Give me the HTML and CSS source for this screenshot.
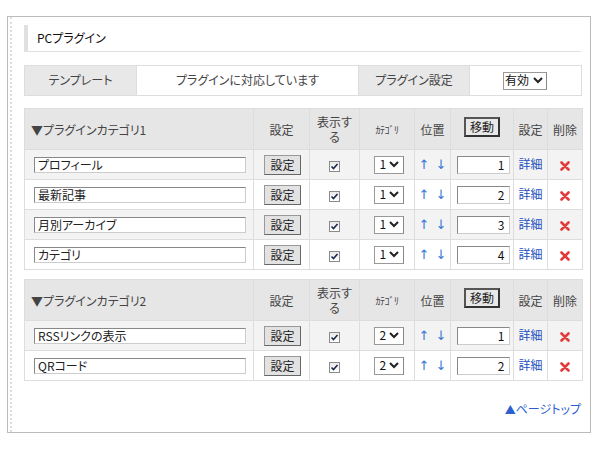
FILE: index.html
```html
<!DOCTYPE html>
<html lang="ja">
<head>
<meta charset="utf-8">
<title>PCプラグイン</title>
<link rel="stylesheet" href="styles.css">
</head>
<body>
<div class="panel">
  <div class="panel-inner">
    <h2 class="title">PCプラグイン</h2>

    <table class="tpl">
      <colgroup><col class="c112"><col class="c222"><col class="c111"><col class="c112"></colgroup>
      <tr>
        <th>テンプレート</th>
        <td>プラグインに対応しています</td>
        <th>プラグイン設定</th>
        <td><span class="sel sel-wide">有効<svg class="chev" viewBox="0 0 10 7" width="10" height="7"><polyline points="1,1 5,5 9,1" fill="none" stroke="#222" stroke-width="2"/></svg></span></td>
      </tr>
    </table>

    <table class="plg">
      <colgroup><col class="w-name"><col class="w-set"><col class="w-show"><col class="w-cat"><col class="w-pos"><col class="w-move"><col class="w-det"><col class="w-del"></colgroup>
      <tr class="head">
        <th class="left">▼プラグインカテゴリ1</th>
        <th>設定</th>
        <th class="show">表示する</th>
        <th class="half">ｶﾃｺﾞﾘ</th>
        <th>位置</th>
        <th><span class="btn-move">移動</span></th>
        <th>設定</th>
        <th>削除</th>
      </tr>
      <tr class="odd">
        <td class="left"><span class="txt">プロフィール</span></td>
        <td><span class="btn">設定</span></td>
        <td><span class="chk"><svg viewBox="0 0 11 11" width="11" height="11"><polyline points="2.5,5.5 4.5,7.5 8.5,3" fill="none" stroke="#1a2a4a" stroke-width="1.6"/></svg></span></td>
        <td><span class="sel">1<svg class="chev" viewBox="0 0 10 7" width="10" height="7"><polyline points="1,1 5,5 9,1" fill="none" stroke="#222" stroke-width="2"/></svg></span></td>
        <td class="arrows"><span>↑</span><span>↓</span></td>
        <td><span class="num">1</span></td>
        <td><a class="link">詳細</a></td>
        <td><svg class="del" viewBox="0 0 10 10" width="10" height="10"><path d="M1.5 1.5 L8.5 8.5 M8.5 1.5 L1.5 8.5" stroke="#e23b3b" stroke-width="2.6" stroke-linecap="round"/></svg></td>
      </tr>
      <tr>
        <td class="left"><span class="txt">最新記事</span></td>
        <td><span class="btn">設定</span></td>
        <td><span class="chk"><svg viewBox="0 0 11 11" width="11" height="11"><polyline points="2.5,5.5 4.5,7.5 8.5,3" fill="none" stroke="#1a2a4a" stroke-width="1.6"/></svg></span></td>
        <td><span class="sel">1<svg class="chev" viewBox="0 0 10 7" width="10" height="7"><polyline points="1,1 5,5 9,1" fill="none" stroke="#222" stroke-width="2"/></svg></span></td>
        <td class="arrows"><span>↑</span><span>↓</span></td>
        <td><span class="num">2</span></td>
        <td><a class="link">詳細</a></td>
        <td><svg class="del" viewBox="0 0 10 10" width="10" height="10"><path d="M1.5 1.5 L8.5 8.5 M8.5 1.5 L1.5 8.5" stroke="#e23b3b" stroke-width="2.6" stroke-linecap="round"/></svg></td>
      </tr>
      <tr class="odd">
        <td class="left"><span class="txt">月別アーカイブ</span></td>
        <td><span class="btn">設定</span></td>
        <td><span class="chk"><svg viewBox="0 0 11 11" width="11" height="11"><polyline points="2.5,5.5 4.5,7.5 8.5,3" fill="none" stroke="#1a2a4a" stroke-width="1.6"/></svg></span></td>
        <td><span class="sel">1<svg class="chev" viewBox="0 0 10 7" width="10" height="7"><polyline points="1,1 5,5 9,1" fill="none" stroke="#222" stroke-width="2"/></svg></span></td>
        <td class="arrows"><span>↑</span><span>↓</span></td>
        <td><span class="num">3</span></td>
        <td><a class="link">詳細</a></td>
        <td><svg class="del" viewBox="0 0 10 10" width="10" height="10"><path d="M1.5 1.5 L8.5 8.5 M8.5 1.5 L1.5 8.5" stroke="#e23b3b" stroke-width="2.6" stroke-linecap="round"/></svg></td>
      </tr>
      <tr>
        <td class="left"><span class="txt">カテゴリ</span></td>
        <td><span class="btn">設定</span></td>
        <td><span class="chk"><svg viewBox="0 0 11 11" width="11" height="11"><polyline points="2.5,5.5 4.5,7.5 8.5,3" fill="none" stroke="#1a2a4a" stroke-width="1.6"/></svg></span></td>
        <td><span class="sel">1<svg class="chev" viewBox="0 0 10 7" width="10" height="7"><polyline points="1,1 5,5 9,1" fill="none" stroke="#222" stroke-width="2"/></svg></span></td>
        <td class="arrows"><span>↑</span><span>↓</span></td>
        <td><span class="num">4</span></td>
        <td><a class="link">詳細</a></td>
        <td><svg class="del" viewBox="0 0 10 10" width="10" height="10"><path d="M1.5 1.5 L8.5 8.5 M8.5 1.5 L1.5 8.5" stroke="#e23b3b" stroke-width="2.6" stroke-linecap="round"/></svg></td>
      </tr>
    </table>

    <table class="plg plg2">
      <colgroup><col class="w-name"><col class="w-set"><col class="w-show"><col class="w-cat"><col class="w-pos"><col class="w-move"><col class="w-det"><col class="w-del"></colgroup>
      <tr class="head">
        <th class="left">▼プラグインカテゴリ2</th>
        <th>設定</th>
        <th class="show">表示する</th>
        <th class="half">ｶﾃｺﾞﾘ</th>
        <th>位置</th>
        <th><span class="btn-move">移動</span></th>
        <th>設定</th>
        <th>削除</th>
      </tr>
      <tr class="odd">
        <td class="left"><span class="txt">RSSリンクの表示</span></td>
        <td><span class="btn">設定</span></td>
        <td><span class="chk"><svg viewBox="0 0 11 11" width="11" height="11"><polyline points="2.5,5.5 4.5,7.5 8.5,3" fill="none" stroke="#1a2a4a" stroke-width="1.6"/></svg></span></td>
        <td><span class="sel">2<svg class="chev" viewBox="0 0 10 7" width="10" height="7"><polyline points="1,1 5,5 9,1" fill="none" stroke="#222" stroke-width="2"/></svg></span></td>
        <td class="arrows"><span>↑</span><span>↓</span></td>
        <td><span class="num">1</span></td>
        <td><a class="link">詳細</a></td>
        <td><svg class="del" viewBox="0 0 10 10" width="10" height="10"><path d="M1.5 1.5 L8.5 8.5 M8.5 1.5 L1.5 8.5" stroke="#e23b3b" stroke-width="2.6" stroke-linecap="round"/></svg></td>
      </tr>
      <tr>
        <td class="left"><span class="txt">QRコード</span></td>
        <td><span class="btn">設定</span></td>
        <td><span class="chk"><svg viewBox="0 0 11 11" width="11" height="11"><polyline points="2.5,5.5 4.5,7.5 8.5,3" fill="none" stroke="#1a2a4a" stroke-width="1.6"/></svg></span></td>
        <td><span class="sel">2<svg class="chev" viewBox="0 0 10 7" width="10" height="7"><polyline points="1,1 5,5 9,1" fill="none" stroke="#222" stroke-width="2"/></svg></span></td>
        <td class="arrows"><span>↑</span><span>↓</span></td>
        <td><span class="num">2</span></td>
        <td><a class="link">詳細</a></td>
        <td><svg class="del" viewBox="0 0 10 10" width="10" height="10"><path d="M1.5 1.5 L8.5 8.5 M8.5 1.5 L1.5 8.5" stroke="#e23b3b" stroke-width="2.6" stroke-linecap="round"/></svg></td>
      </tr>
    </table>

    <div class="pagetop"><a class="link"><span class="tri">▲</span>ページトップ</a></div>
  </div>
</div>
</body>
</html>
```

FILE: styles.css
```css
html, body {
  margin: 0;
  padding: 0;
  background: #fff;
}
body {
  font-family: "Noto Sans CJK JP", "Liberation Sans", sans-serif;
  font-size: 12px;
  font-feature-settings: "palt";
  color: #444;
  padding: 16px 5px 0 7px;
  line-height: 1.2;
}
.panel {
  border: 1px solid #bbb;
  width: 582px;
  height: 415px;
  box-sizing: content-box;
}
.panel-inner {
  margin-left: 2px;
  border-left: 2px dotted #ddd;
  height: 100%;
  padding: 8px 9px 0 12px;
  box-sizing: border-box;
}
.title {
  margin: 0;
  height: 27px;
  box-sizing: border-box;
  border-left: 4px solid #e0e0e0;
  border-bottom: 1px solid #e0e0e0;
  padding-left: 9px;
  font-size: 12px;
  font-weight: normal;
  color: #111;
  line-height: 26px;
}
table {
  border-collapse: collapse;
  table-layout: fixed;
  width: 557px;
}
td, th {
  border: 1px solid #ddd;
  padding: 0;
  font-weight: normal;
  text-align: center;
  vertical-align: middle;
  color: #444;
}
.tpl {
  margin-top: 13px;
}
.tpl td, .tpl th { height: 29px; }
.tpl th { background: #e8e8e8; }
.c112 { width: 112px; }
.c222 { width: 222px; }
.c111 { width: 111px; }

.plg { margin-top: 12px; width: 558px; }
.plg2 { margin-top: 9px; }
.w-name { width: 229px; }
.w-set { width: 56px; }
.w-show { width: 50px; }
.w-cat { width: 55px; }
.w-pos { width: 36px; }
.w-move { width: 63px; }
.w-det { width: 34px; }
.w-del { width: 35px; }

.plg .head th {
  background: #e6e6e6;
  height: 40px;
  line-height: 15px;
}
.plg .head th.show { padding: 0 6px; }
.plg td { height: 29px; }
.plg tr.odd td { background: #f3f3f3; }
.left { text-align: left; }
.plg th.left { padding-left: 6px; }
.plg td.left { padding-left: 9px; }
.half { font-size: 10px; letter-spacing: -0.5px; }

.txt {
  display: block;
  width: 212px;
  height: 16px;
  box-sizing: border-box;
  border: 1px solid #888;
  border-right-color: #ccc;
  border-bottom-color: #ccc;
  background: #fff;
  padding-left: 3px;
  line-height: 14px;
  color: #222;
}
.btn {
  display: inline-block;
  width: 37px;
  height: 20px;
  box-sizing: border-box;
  border: 1px solid #999;
  border-right-color: #666;
  border-bottom-color: #666;
  background: #e2e2e2;
  line-height: 18px;
  color: #222;
  margin-left: 2px;
}
.chk {
  display: inline-block;
  width: 11px;
  height: 11px;
  box-sizing: border-box;
  border: 1px solid #8a8a8a;
  background: linear-gradient(#eaeaea, #fff);
  vertical-align: middle;
  position: relative;
}
.chk svg { position: absolute; left: -1px; top: -1px; }
.sel {
  display: inline-flex;
  align-items: center;
  justify-content: space-between;
  width: 30px;
  height: 18px;
  box-sizing: border-box;
  border: 1px solid #999;
  border-right-color: #888;
  background: #fff;
  padding: 0 4px 0 5px;
  color: #111;
  font-size: 12px;
  vertical-align: middle;
  margin-left: 3px;
}
.sel-wide {
  width: 44px;
  height: 18px;
  padding: 0 3px 0 1px;
  margin-left: -1px;
}
.chev { display: block; }
.arrows {
  color: #3a78d6;
  font-family: "DejaVu Sans", sans-serif;
  font-size: 13px;
}
.arrows span { display: inline-block; margin: 0 3px; }
.num {
  display: inline-block;
  width: 53px;
  height: 18px;
  box-sizing: border-box;
  border: 1px solid #888;
  border-right-color: #ccc;
  border-bottom-color: #ccc;
  background: #fff;
  text-align: right;
  padding-right: 4px;
  line-height: 16px;
  color: #111;
  vertical-align: middle;
  margin-left: 2px;
}
.btn-move {
  display: inline-block;
  width: 36px;
  height: 20px;
  box-sizing: border-box;
  border: 2px solid #333;
  border-top-color: #555;
  border-left-color: #555;
  background: #e8e8e8;
  line-height: 16px;
  color: #222;
  margin-top: -8px;
  vertical-align: middle;
}
.link {
  color: #2350c0;
  text-decoration: none;
}
.del { display: inline-block; vertical-align: middle; }
.pagetop {
  text-align: right;
  margin-top: 21px;
}
.pagetop .link { color: #2d5fd0; }
.tri { font-size: 11px; }
```
